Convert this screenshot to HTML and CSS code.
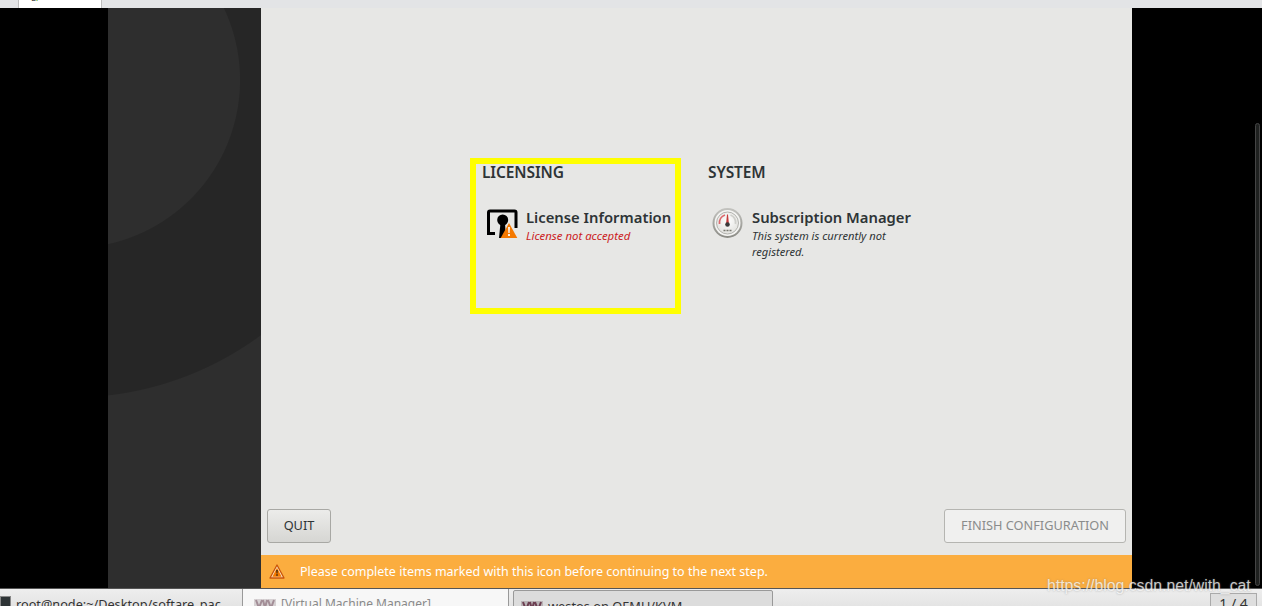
FILE: index.html
```html
<!DOCTYPE html>
<html lang="en">
<head>
<meta charset="utf-8">
<title>Initial Setup</title>
<link rel="stylesheet" href="styles.css">
</head>
<body>
<div class="topbar">
  <div class="top-tab"><span class="top-tab-mark">L<span class="top-tab-green">P</span></span></div>
</div>
<div class="guest">
  <div class="stage">
    <aside class="sidebar"></aside>
    <main class="content">
      <div class="hub">
        <section class="category category-licensing">
          <h2 class="category-title">LICENSING</h2>
          <div class="spoke">
            <svg class="spoke-icon" width="36" height="36" viewBox="0 0 36 36">
              <path d="M12 29.500H5.500V8.500a1.500 1.500 0 0 1 1.500-1.500h24.500a1.500 1.500 0 0 1 1.500 1.500V24" fill="none" stroke="#000" stroke-width="3"/>
              <circle cx="19.700" cy="16" r="5.500" fill="#000"/>
              <path d="M17.500 19h4.500l1 15h-7z" fill="#000"/>
              <path d="M26 19l8.300 15H17.700z" fill="#f57900"/>
              <path d="M25.100 23h1.800l-.3 6h-1.200zM25.100 30h1.800v2h-1.800z" fill="#fff"/>
            </svg>
            <div class="spoke-text">
              <div class="spoke-name">License Information</div>
              <div class="spoke-status status-error">License not accepted</div>
            </div>
          </div>
        </section>
        <section class="category category-system">
          <h2 class="category-title">SYSTEM</h2>
          <div class="spoke">
            <svg class="spoke-icon" width="36" height="36" viewBox="0 0 36 36">
              <defs>
                <linearGradient id="rim" x1="0" y1="0" x2="0" y2="1">
                  <stop offset="0" stop-color="#c4c4c0"/>
                  <stop offset="1" stop-color="#8b8b85"/>
                </linearGradient>
                <radialGradient id="dial" cx=".5" cy=".4" r=".6">
                  <stop offset="0" stop-color="#ffffff"/>
                  <stop offset="1" stop-color="#e2e2de"/>
                </radialGradient>
              </defs>
              <circle cx="18.500" cy="19" r="15" fill="url(#rim)"/>
              <circle cx="18.500" cy="19" r="13" fill="#f4f4f2"/>
              <circle cx="18.500" cy="19" r="11" fill="url(#dial)" stroke="#a3a39e" stroke-width=".8"/>
              <path d="M10.500 20A8.500 8.500 0 0 1 16 11" fill="none" stroke="#dc6a6e" stroke-width="1.800"/>
              <path d="M21.500 11A8.500 8.500 0 0 1 26.500 20" fill="none" stroke="#cfcfcb" stroke-width="1.800"/>
              <path d="M18 10.500h1l.9 9h-2.800z" fill="#c43b3b"/>
              <circle cx="18.500" cy="20.500" r="2.300" fill="#3a3a3a"/>
              <path d="M14.500 26.500h2M17.500 26.500h2M20.500 26.500h2" stroke="#77776f" stroke-width="1.500"/>
            </svg>
            <div class="spoke-text">
              <div class="spoke-name">Subscription Manager</div>
              <div class="spoke-status">This system is currently not registered.</div>
            </div>
          </div>
        </section>
        <div class="highlight"></div>
      </div>
      <div class="actions">
        <button class="btn btn-quit" type="button">QUIT</button>
        <button class="btn btn-disabled" type="button" disabled>FINISH CONFIGURATION</button>
      </div>
      <div class="warning">
        <svg class="warning-icon" width="16" height="15" viewBox="0 0 16 15">
          <path d="M8 1l7 13H1z" fill="#f8e7c8" stroke="#c9540a" stroke-width="1.300" stroke-linejoin="round"/>
          <path d="M8 3.800L12.600 12.700H3.400z" fill="#f57900"/>
          <path d="M7.200 6h1.600l-.3 3.600h-1zM7.200 10.300h1.600v1.500H7.200z" fill="#3b2a12"/>
        </svg>
        <span>Please complete items marked with this icon before continuing to the next step.</span>
      </div>
    </main>
  </div>
  <div class="scrollbar"></div>
</div>
<footer class="taskbar">
  <div class="task task-terminal">
    <span class="terminal-icon"></span>
    <span class="task-label task-label-terminal">root@node:~/Desktop/softare_pac</span>
  </div>
  <div class="task task-manager">
    <svg class="vm-icon" width="24" height="14" viewBox="0 0 24 14"><path d="M1 2h22v10H1z" fill="#d6d1d3"/><path d="M3 3l3 8 3-8M10 3l2 8 2-8M15 3l3 8 3-8" fill="none" stroke="#a38e97" stroke-width="2"/></svg>
    <span class="task-label task-label-muted">[Virtual Machine Manager]</span>
  </div>
  <div class="task task-active">
    <svg class="vm-icon" width="24" height="14" viewBox="0 0 24 14"><path d="M1 2h22v10H1z" fill="#b9b3b6"/><path d="M3 3l3 8 3-8M10 3l2 8 2-8M15 3l3 8 3-8" fill="none" stroke="#6d3f52" stroke-width="2"/></svg>
    <span class="task-label">westos on QEMU/KVM</span>
  </div>
  <div class="pager">1 / 4</div>
</footer>
<div class="watermark">https://blog.csdn.net/with_cat</div>
</body>
</html>
```
FILE: styles.css
```css
* { box-sizing: border-box; }
html, body { margin: 0; height: 100%; }
body {
  height: 606px;
  overflow: hidden;
  position: relative;
  display: flex;
  flex-direction: column;
  background: #000;
  font-family: "Noto Sans", "Open Sans", sans-serif;
}
.topbar {
  flex: 0 0 8px;
  display: flex;
  background: #e3e4e6;
  overflow: hidden;
}
.top-tab {
  width: 84px;
  margin-left: 18px;
  background: #fff;
  border-left: 1px solid #bdbdbd;
  border-right: 1px solid #bdbdbd;
  padding-left: 12px;
  font-size: 9px;
  line-height: 1;
  color: #444;
}
.top-tab-mark { display: block; margin-top: -7px; }
.top-tab-green { color: #4e9a06; }
.guest {
  flex: 0 0 580px;
  position: relative;
  display: flex;
  padding-left: 108px;
  background: #000;
}
.stage { width: 1024px; display: flex; }
.sidebar {
  width: 153px;
  background: radial-gradient(circle at -36px 72px,
    #2e2e2e 167.500px, #262626 168.500px,
    #262626 317px, #2e2e2e 318px);
}
.content {
  flex: 1;
  display: flex;
  flex-direction: column;
  background: #e7e7e5;
}
.hub {
  flex: 1;
  position: relative;
  display: grid;
  grid-template-columns: 226px 226px;
  align-content: start;
  padding: 154px 0 0 221px;
}
.category-title {
  margin: 0 0 22px;
  font-size: 15.500px;
  font-weight: 600;
  letter-spacing: -.1px;
  line-height: 20px;
  color: #2e3436;
}
.spoke { display: flex; align-items: flex-start; gap: 7px; padding-left: 1px; }
.spoke-icon { flex: none; }
.spoke-text { width: 170px; padding-top: 3px; }
.spoke-name {
  font-size: 14.800px;
  font-weight: 600;
  line-height: 21px;
  white-space: nowrap;
  color: #2e3436;
}
.spoke-status {
  font-size: 11.200px;
  font-style: italic;
  line-height: 16px;
  color: #2e3436;
}
.status-error { color: #cc1c24; font-size: 11.400px; }
.highlight {
  position: absolute;
  left: 209px;
  top: 150px;
  width: 211px;
  height: 156px;
  border: 6px solid #ffff00;
}
.actions {
  display: flex;
  justify-content: space-between;
  padding: 0 6px;
  margin-bottom: 12px;
}
.btn {
  height: 34px;
  padding: 0 16px 2px;
  border: 1px solid #a8a8a4;
  border-radius: 3px;
  background: linear-gradient(#ececea, #d6d6d3);
  font-family: inherit;
  font-size: 12.750px;
  color: #2e3436;
}
.btn-quit { width: 64px; padding: 0 0 2px; }
.btn-disabled {
  background: #f0f0ef;
  border-color: #b5b5b1;
  color: #8a8c8c;
}
.warning {
  flex: 0 0 33px;
  display: flex;
  align-items: center;
  gap: 15px;
  padding-left: 8px;
  background: #fbad3f;
  font-size: 12.500px;
  color: #fff;
}
.warning-icon { flex: none; }
.scrollbar {
  position: absolute;
  left: 1255px;
  top: 115px;
  bottom: 2px;
  width: 5px;
  background: #1f2120;
  border: 1px solid #444;
  border-radius: 3px;
}
.taskbar {
  flex: 0 0 18px;
  display: flex;
  align-items: flex-start;
  border-top: 1px solid #555;
  background: linear-gradient(#eeeeee, #e4e4e4);
  overflow: hidden;
  font-size: 12.800px;
  color: #333;
}
.task { display: flex; align-items: flex-start; height: 30px; }
.task-label { line-height: 18px; margin-top: 6px; white-space: nowrap; }
.task-label-terminal { font-size: 12.700px; }
.task-label-muted { color: #8a8a8a; font-size: 12px; }
.task-terminal { width: 243px; border-right: 1px solid #999; gap: 5px; overflow: hidden; }
.terminal-icon {
  width: 11px;
  height: 14px;
  margin-top: 7px;
  background: #2e3436;
  border: 1px solid #888;
}
.task-manager {
  width: 266px;
  background: #f7f7f7;
  border-right: 1px solid #999;
  padding-left: 10px;
  gap: 4px;
}
.vm-icon { flex: none; margin-top: 8px; }
.task-active {
  width: 260px;
  margin: 1px 0 0 4px;
  background: #dcdcdc;
  border: 1px solid #999;
  border-radius: 2px 2px 0 0;
  padding-left: 6px;
  gap: 4px;
}
.pager {
  width: 47px;
  height: 30px;
  margin: 4px 0 0 437px;
  padding-top: 1px;
  border: 1px solid #aaa;
  background: #dedede;
  text-align: center;
  font-size: 14px;
  line-height: 18px;
}
.watermark {
  position: absolute;
  left: 1047px;
  top: 576px;
  font-family: "Liberation Sans", sans-serif;
  font-size: 15.800px;
  line-height: 20px;
  color: rgba(255, 255, 255, .75);
  text-shadow: 0 0 2px rgba(120, 120, 120, .6);
  white-space: nowrap;
}
```
